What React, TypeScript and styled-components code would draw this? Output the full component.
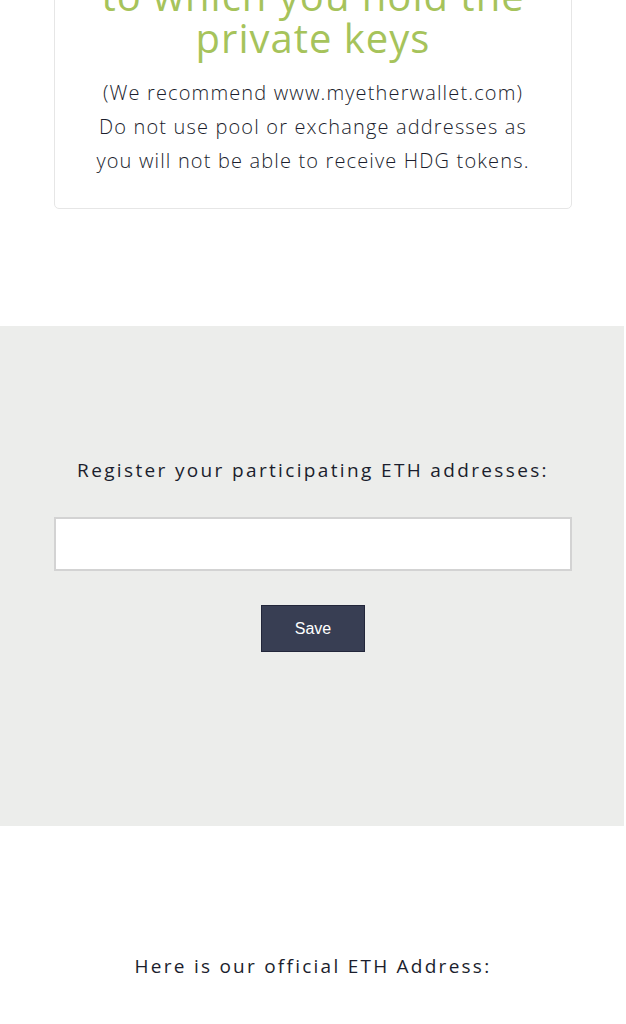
import * as React from 'react';
import styled, { createGlobalStyle } from 'styled-components';

const COLORS = {
  green: '#a6c35b',
  text: '#1b1e2d',
  grey: '#ecedeb',
  border: '#e6e6e6',
  inputBorder: '#d3d3d3',
  button: '#383e53',
};

const GlobalStyle = createGlobalStyle`
  html, body {
    margin: 0;
    padding: 0;
    background: #fff;
    overflow: hidden;
  }
  body {
    font-family: "Open Sans", "Noto Sans", sans-serif;
    color: ${COLORS.text};
  }
`;

const Page = styled.div`
  display: flex;
  flex-direction: column;
  width: 626px;
`;

// the card starts above the visible area, as in a scrolled page
const Card = styled.div`
  box-sizing: border-box;
  margin: -60px 54px 0 54px;
  padding: 34px 10px 30px;
  border: 1px solid ${COLORS.border};
  border-radius: 5px;
  text-align: center;
  background: #fff;
`;

const Heading = styled.h2`
  margin: 0 0 17px;
  font-size: 40px;
  line-height: 42px;
  font-weight: 400;
  letter-spacing: 1px;
  color: ${COLORS.green};
`;

const Note = styled.p`
  margin: 0;
  font-size: 20px;
  line-height: 34px;
  font-weight: 300;
  letter-spacing: 1.15px;
`;

const Section = styled.section`
  box-sizing: border-box;
  margin: 117px 2px 0 0;
  height: 500px;
  background: ${COLORS.grey};
  padding: 130px 52px 0 54px;
  display: flex;
  flex-direction: column;
  align-items: center;
`;

const Label = styled.p`
  margin: 0 0 33px;
  font-size: 19px;
  line-height: 28px;
  letter-spacing: 2.35px;
  text-align: center;
`;

const AddressInput = styled.input`
  box-sizing: border-box;
  width: 100%;
  height: 54px;
  border: 2px solid ${COLORS.inputBorder};
  background: #fff;
  outline: none;
  padding: 0 12px;
  font-size: 16px;
`;

const SaveButton = styled.button`
  margin-top: 34px;
  width: 104px;
  height: 47px;
  border: 1px solid #22263a;
  background: ${COLORS.button};
  color: #fff;
  font-family: "Liberation Sans", Arial, sans-serif;
  font-size: 16px;
`;

const Footer = styled.p`
  margin: 126px 0 0;
  font-size: 19px;
  line-height: 28px;
  letter-spacing: 2.25px;
  text-align: center;
`;

export default function App() {
  return (
    <Page>
      <GlobalStyle />
      <Card>
        <Heading>
          to which you hold the
          <br />
          private keys
        </Heading>
        <Note>
          (We recommend www.myetherwallet.com)
          <br />
          Do not use pool or exchange addresses as
          <br />
          you will not be able to receive HDG tokens.
        </Note>
      </Card>
      <Section>
        <Label>Register your participating ETH addresses:</Label>
        <AddressInput type="text" />
        <SaveButton>Save</SaveButton>
      </Section>
      <Footer>Here is our official ETH Address:</Footer>
    </Page>
  );
}
